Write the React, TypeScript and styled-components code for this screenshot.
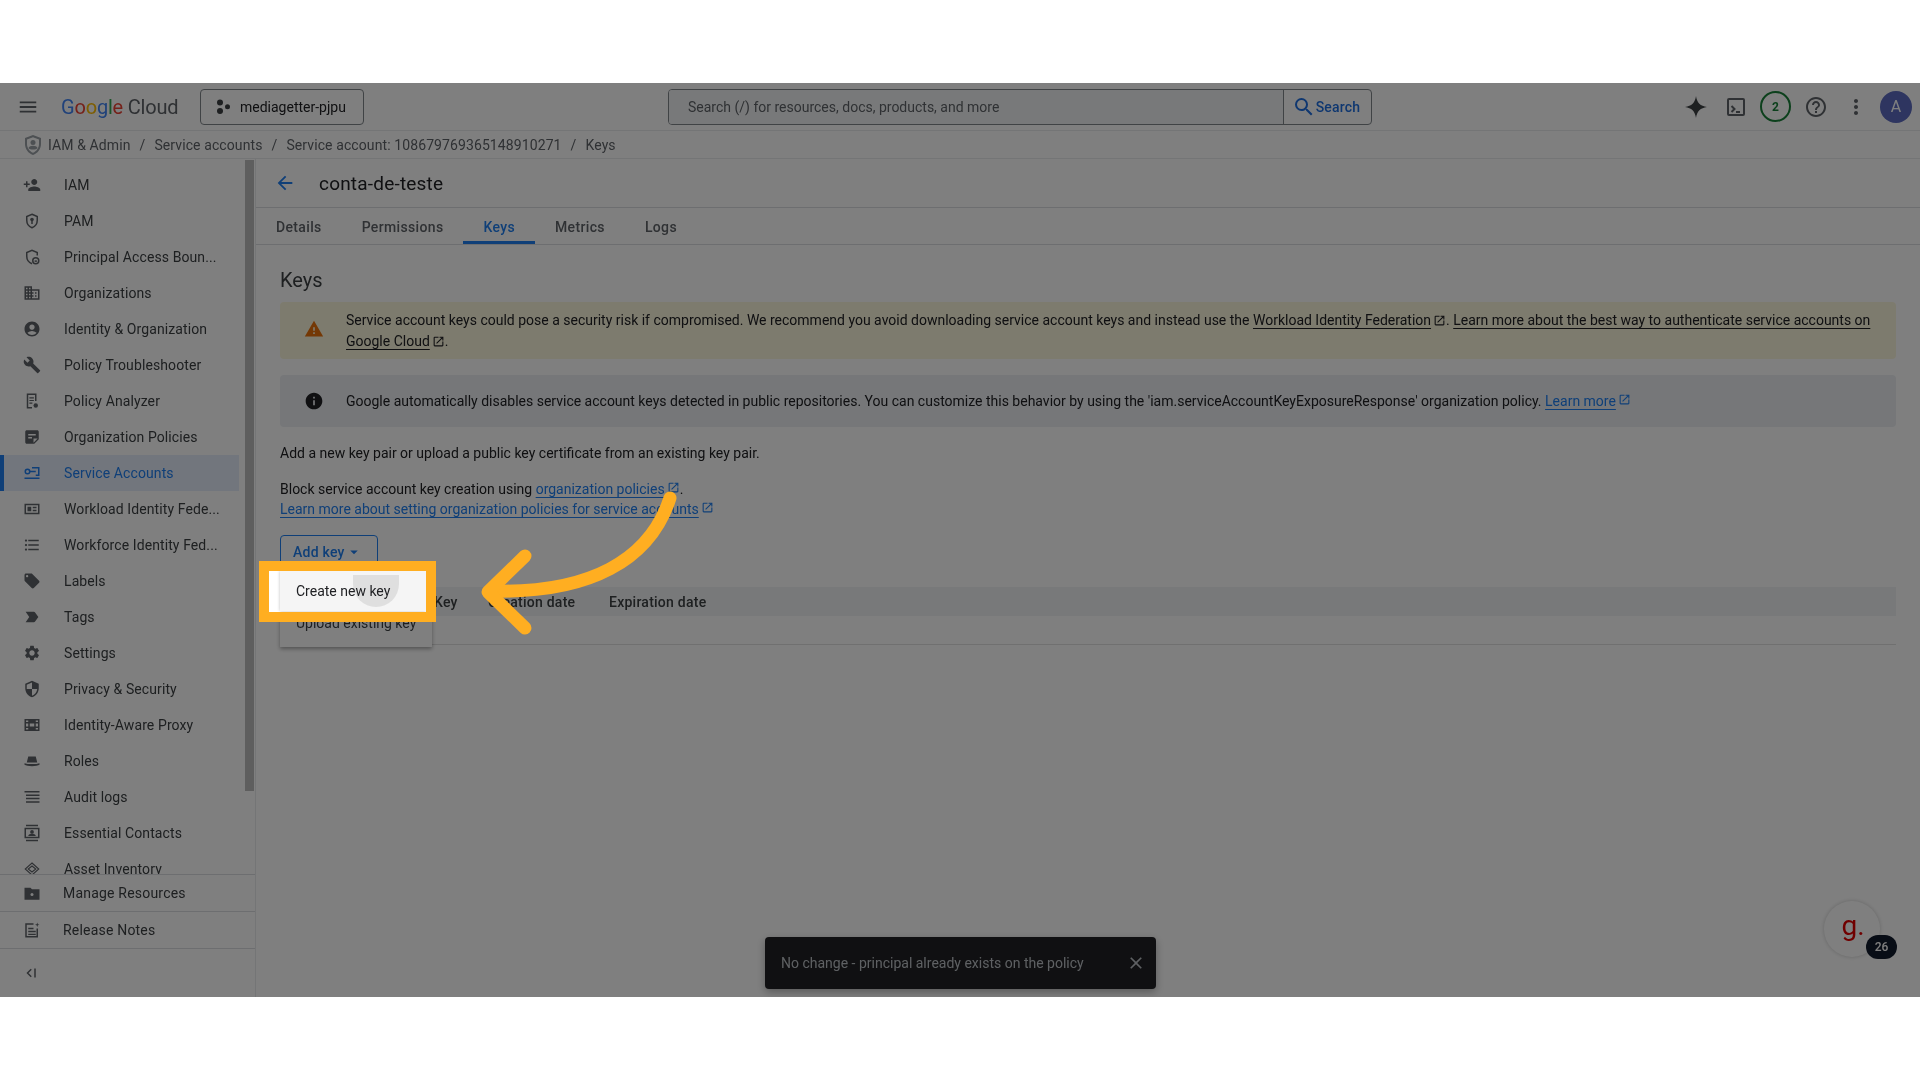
import React from 'react';
import styled, { createGlobalStyle } from 'styled-components';
import {
  MdAccountCircle,
  MdArrowBack,
  MdArrowDropDown,
  MdBuild,
  MdClose,
  MdFormatListBulleted,
  MdHelpOutline,
  MdInfo,
  MdLabelImportant,
  MdLocalOffer,
  MdMenu,
  MdMoreVert,
  MdOpenInNew,
  MdOutlineBusiness,
  MdPersonAdd,
  MdSearch,
  MdSecurity,
  MdSettings,
  MdStickyNote2,
  MdWarning,
} from 'react-icons/md';

const BLUE = '#1f7ff0';
const SANS = 'Roboto, "Liberation Sans", sans-serif';

const GlobalStyle = createGlobalStyle`
  html, body {
    margin: 0;
    padding: 0;
    background: #fff;
    font-family: ${SANS};
    overflow: hidden;
  }
`;

const Page = styled.div`
  display: flex;
  flex-direction: column;
  width: 1920px;
  height: 1080px;
`;

const Band = styled.div`
  flex: 0 0 83px;
  background: #fff;
`;

const Console = styled.div`
  position: relative;
  flex: 0 0 914px;
  display: flex;
  flex-direction: column;
  overflow: hidden;
  background: #fff;
  color: #202124;
  font-size: 14px;
  filter: blur(0.45px);
`;

// Top bar
const Header = styled.header`
  flex: 0 0 47px;
  display: flex;
  align-items: center;
  padding: 0 8px 0 17px;
  border-bottom: 1px solid #e8eaed;
`;

const IconSlot = styled.span<{ $color?: string }>`
  display: inline-flex;
  align-items: center;
  justify-content: center;
  color: ${({ $color }) => $color || '#5f6368'};
`;

const Logo = styled.div`
  margin-left: 22px;
  width: 117px;
  font-size: 20px;
  letter-spacing: -0.2px;
  color: #5f6368;
  white-space: nowrap;
`;

const LogoLetter = styled.span<{ $color: string }>`
  color: ${({ $color }) => $color};
`;

const ProjectPicker = styled.div`
  margin-left: 22px;
  width: 164px;
  height: 36px;
  box-sizing: border-box;
  display: flex;
  align-items: center;
  gap: 9px;
  padding-left: 14px;
  border: 1px solid #80868b;
  border-radius: 4px;
  font-size: 14px;
  color: #202124;
`;

const SearchGroup = styled.div`
  margin-left: 304px;
  width: 704px;
  height: 36px;
  box-sizing: border-box;
  display: flex;
  border: 1px solid #80868b;
  border-radius: 4px;
`;

const SearchField = styled.div`
  flex: 1;
  display: flex;
  align-items: center;
  padding-left: 19px;
  background: #f1f3f4;
  color: #5f6368;
  border-right: 1px solid #80868b;
  border-radius: 3px 0 0 3px;
`;

const SearchButton = styled.div`
  flex: 0 0 87px;
  box-sizing: border-box;
  display: flex;
  align-items: center;
  justify-content: center;
  padding-right: 3px;
  color: #1f6fe0;
  font-weight: 500;
  letter-spacing: 0.2px;
`;

const HeaderIcons = styled.div`
  margin-left: auto;
  display: flex;
  align-items: center;
  gap: 8px;
`;

const HeaderIcon = styled.div`
  width: 32px;
  height: 32px;
  display: flex;
  align-items: center;
  justify-content: center;
`;

const StatusRing = styled.div`
  width: 31px;
  height: 31px;
  margin-right: 1px;
  box-sizing: border-box;
  display: flex;
  align-items: center;
  justify-content: center;
  border: 2px solid #188038;
  border-radius: 50%;
  color: #188038;
  font-size: 12px;
  font-weight: 700;
`;

const Avatar = styled.div`
  width: 32px;
  height: 32px;
  display: flex;
  align-items: center;
  justify-content: center;
  border-radius: 50%;
  background: #5c6bc0;
  color: #fff;
  font-size: 16px;
`;

// Breadcrumb
const Crumbs = styled.nav`
  flex: 0 0 28px;
  box-sizing: border-box;
  display: flex;
  align-items: center;
  gap: 5px;
  padding-left: 23px;
  border-bottom: 1px solid #e8eaed;
  color: #5f6368;
  letter-spacing: 0.1px;
  font-size: 14px;
`;

const CrumbSep = styled.span`
  margin: 0 4px;
`;

// Body
const Body = styled.div`
  flex: 1;
  min-height: 0;
  display: flex;
`;

const Sidebar = styled.aside`
  position: relative;
  flex: 0 0 256px;
  box-sizing: border-box;
  display: flex;
  flex-direction: column;
  border-right: 1px solid #e8eaed;
`;

const NavList = styled.div`
  flex: 1;
  min-height: 0;
  overflow: hidden;
  padding-top: 8px;
  border-bottom: 1px solid #dadce0;
`;

const NavItem = styled.div<{ $active?: boolean }>`
  width: 239px;
  height: 36px;
  box-sizing: border-box;
  display: flex;
  align-items: center;
  gap: 23px;
  color: ${({ $active }) => ($active ? BLUE : '#3c4043')};
  background: ${({ $active }) => ($active ? '#e4ecfb' : 'transparent')};
  border-left: ${({ $active }) => ($active ? `4px solid ${BLUE}` : '0')};
  padding-left: ${({ $active }) => ($active ? '19px' : '23px')};
  letter-spacing: 0.1px;
  white-space: nowrap;
`;

const Scrollbar = styled.div`
  position: absolute;
  top: 1px;
  left: 245px;
  width: 9px;
  height: 631px;
  background: #bdbdbd;
`;

const FootItem = styled.div`
  flex: 0 0 37px;
  box-sizing: border-box;
  display: flex;
  align-items: center;
  gap: 22px;
  padding-left: 23px;
  border-bottom: 1px solid #dadce0;
  color: #3c4043;
  letter-spacing: 0.2px;
`;

const Collapse = styled.div`
  flex: 0 0 48px;
  display: flex;
  align-items: center;
  padding-left: 23px;
`;

// Main column
const Main = styled.main`
  flex: 1;
  min-width: 0;
  display: flex;
  flex-direction: column;
`;

const TitleRow = styled.div`
  flex: 0 0 49px;
  box-sizing: border-box;
  display: flex;
  align-items: center;
  gap: 23px;
  padding-left: 18px;
  border-bottom: 1px solid #dadce0;
`;

const Title = styled.h1`
  margin: 0;
  font-size: 19px;
  font-weight: 400;
  letter-spacing: 0.2px;
  color: #202124;
`;

const Tabs = styled.div`
  flex: 0 0 37px;
  box-sizing: border-box;
  display: flex;
  border-bottom: 1px solid #dadce0;
`;

const Tab = styled.div<{ $active?: boolean }>`
  display: flex;
  align-items: center;
  padding: 2px 20px 0;
  font-weight: 500;
  letter-spacing: 0.35px;
  color: ${({ $active }) => ($active ? BLUE : '#5f6368')};
  box-shadow: ${({ $active }) => ($active ? `inset 0 -3px 0 ${BLUE}` : 'none')};
`;

const Content = styled.div`
  padding: 22px 24px 0;
`;

const SectionTitle = styled.h2`
  margin: 0 0 8px;
  height: 27px;
  line-height: 27px;
  font-size: 20px;
  font-weight: 400;
  color: #3c4043;
`;

const Banner = styled.div<{ $tone: 'warn' | 'info' }>`
  display: flex;
  align-items: center;
  box-sizing: border-box;
  height: ${({ $tone }) => ($tone === 'warn' ? '57px' : '52px')};
  margin-bottom: 16px;
  padding: 0 16px 0 24px;
  gap: 22px;
  border-radius: 4px;
  line-height: 21px;
  background: ${({ $tone }) => ($tone === 'warn' ? '#fbf6dc' : '#eceef3')};
`;

const BannerIcon = styled(IconSlot)`
  flex: none;
  margin-top: ${({ $color }) => ($color === '#e8710a' ? '-4px' : '0')};
`;

const BannerText = styled.div`
  white-space: nowrap;
`;

const TextLink = styled.a<{ $plain?: boolean }>`
  color: ${({ $plain }) => ($plain ? '#202124' : BLUE)};
  text-decoration: underline;
  text-underline-offset: 3px;
`;

const ExternalIcon = styled(MdOpenInNew)`
  width: 13px;
  height: 13px;
  margin-left: 2px;
  vertical-align: -2px;
`;

const Copy = styled.p`
  margin: 0;
  line-height: 20px;
`;

const CopyBlock = styled(Copy)`
  margin-top: 16px;
`;

const AddKeyButton = styled.div`
  margin-top: 16px;
  width: 98px;
  height: 36px;
  box-sizing: border-box;
  display: flex;
  align-items: center;
  padding: 0 0 2px 12px;
  border: 1px solid ${BLUE};
  border-radius: 4px;
  color: ${BLUE};
  font-weight: 500;
  letter-spacing: 0.25px;
`;

const KeyTable = styled.div`
  margin-top: 16px;
  border-bottom: 1px solid #e0e0e0;
  padding-bottom: 28px;
`;

const KeyTableHead = styled.div`
  display: grid;
  grid-template-columns: 154px 54px 121px 1fr;
  height: 29px;
  align-items: center;
  background: #f1f3f4;
  color: #3c4043;
  font-weight: 500;
  letter-spacing: 0.25px;
`;

// Things lying over the page
const KeyMenu = styled.div`
  position: absolute;
  left: 280px;
  top: 488px;
  width: 152px;
  height: 76px;
  box-sizing: border-box;
  padding-top: 36px;
  background: #fff;
  box-shadow: 0 2px 4px rgba(0, 0, 0, 0.35);
`;

const MenuItem = styled.div`
  height: 32px;
  display: flex;
  align-items: center;
  padding-left: 16px;
  color: #3c4043;
  white-space: nowrap;
`;

const Toast = styled.div`
  position: absolute;
  left: 765px;
  bottom: 8px;
  width: 391px;
  height: 52px;
  box-sizing: border-box;
  display: flex;
  align-items: center;
  justify-content: space-between;
  padding: 0 10px 0 16px;
  border-radius: 4px;
  background: #202124;
  color: #bdc1c6;
  box-shadow: 0 3px 8px rgba(0, 0, 0, 0.3);
`;

const HelpBubble = styled.div`
  position: absolute;
  left: 1824px;
  top: 818px;
  width: 56px;
  height: 56px;
  box-sizing: border-box;
  display: flex;
  align-items: center;
  justify-content: center;
  padding-bottom: 6px;
  padding-left: 2px;
  border-radius: 50%;
  background: #fff;
  box-shadow: 0 0 4px rgba(0, 0, 0, 0.2);
  color: #e00000;
  font-size: 28px;
  font-weight: 400;
  line-height: 1;
`;

const HelpCount = styled.div`
  position: absolute;
  left: 42px;
  top: 34px;
  width: 31px;
  height: 24px;
  display: flex;
  align-items: center;
  justify-content: center;
  border-radius: 12px;
  background: #111a2c;
  color: #fff;
  font-size: 12px;
  font-weight: 500;
`;

const Scrim = styled.div`
  position: absolute;
  inset: 0;
  background: rgba(0, 0, 0, 0.5);
`;

const Spotlight = styled.div`
  position: absolute;
  left: 259px;
  top: 478px;
  width: 177px;
  height: 61px;
  box-sizing: border-box;
  overflow: hidden;
  border: 10px solid #ffae21;
  background: #fff;
`;

const SpotlightMenu = styled.div`
  position: relative;
  margin-left: 11px;
  height: 36px;
  padding-top: 4px;
  background: #f5f5f5;
  box-shadow: 0 0 3px rgba(0, 0, 0, 0.25);
  overflow: hidden;
`;

const Ripple = styled.div`
  position: absolute;
  left: 73px;
  top: 4px;
  width: 46px;
  height: 32px;
  border-radius: 0 0 23px 23px;
  background: #dfdfdf;
`;

const SpotlightLabel = styled(MenuItem)`
  position: relative;
  color: #202124;
`;

const ArrowLayer = styled.svg`
  position: absolute;
  left: 470px;
  top: 400px;
`;

const GlyphBox = styled.svg`
  flex: none;
  display: block;
`;

type GlyphProps = { size?: number; children: React.ReactNode };

const Glyph = ({ size = 18, children }: GlyphProps) => (
  <GlyphBox width={size} height={size} viewBox="0 0 24 24" fill="#5f6368">
    {children}
  </GlyphBox>
);

const stroke = { fill: 'none', stroke: '#5f6368', strokeWidth: 2 };

const navItems: { label: string; icon: React.ReactNode; active?: boolean }[] = [
  { label: 'IAM', icon: <MdPersonAdd size={18} /> },
  {
    label: 'PAM',
    icon: (
      <Glyph>
        <path {...stroke} d="M12 3l7 3v5c0 4.6-3 8.4-7 10-4-1.6-7-5.4-7-10V6z" />
        <circle cx="12" cy="10" r="2.4" />
        <path d="M11 11h2v5h-2z" />
      </Glyph>
    ),
  },
  {
    label: 'Principal Access Boun...',
    icon: (
      <Glyph>
        <path {...stroke} d="M19 10V6l-7-3-7 3v5c0 4.6 3 8.4 7 10" />
        <circle {...stroke} cx="17" cy="17" r="4" />
        <path d="M15.5 16.5h3v2h-3z" />
      </Glyph>
    ),
  },
  { label: 'Organizations', icon: <MdOutlineBusiness size={18} /> },
  { label: 'Identity & Organization', icon: <MdAccountCircle size={18} /> },
  { label: 'Policy Troubleshooter', icon: <MdBuild size={18} /> },
  {
    label: 'Policy Analyzer',
    icon: (
      <Glyph>
        <path {...stroke} d="M12 21H6V3h11v9" />
        <path d="M8.5 7h6v1.5h-6zM8.5 10.500h6V12h-6zM8.500 14h4v1.500h-4z" />
        <circle cx="17" cy="18" r="3" />
      </Glyph>
    ),
  },
  { label: 'Organization Policies', icon: <MdStickyNote2 size={18} /> },
  {
    label: 'Service Accounts',
    active: true,
    icon: (
      <Glyph>
        <g fill="none" stroke={BLUE} strokeWidth="2">
          <circle cx="6" cy="10" r="3" />
          <path d="M9 10h8M12 5h9v10h-4M2 19h20" />
        </g>
      </Glyph>
    ),
  },
  {
    label: 'Workload Identity Fede...',
    icon: (
      <Glyph>
        <path d="M2 5h20v14H2zm2 2v10h16V7z" />
        <path d="M6 9h5v6H6zM13 9h5v2h-5zM13 13h5v2h-5z" />
      </Glyph>
    ),
  },
  { label: 'Workforce Identity Fed...', icon: <MdFormatListBulleted size={18} /> },
  { label: 'Labels', icon: <MdLocalOffer size={18} /> },
  { label: 'Tags', icon: <MdLabelImportant size={18} /> },
  { label: 'Settings', icon: <MdSettings size={18} /> },
  { label: 'Privacy & Security', icon: <MdSecurity size={18} /> },
  {
    label: 'Identity-Aware Proxy',
    icon: (
      <Glyph>
        <path d="M2 4h20v16H2zm5 2H4v2h3zm0 4H4v4h3zm0 6H4v2h3zM20 6h-3v2h3zm0 4h-3v4h3zm0 6h-3v2h3z" />
        <path d="M9 10h6v4H9z" fill="#fff" />
      </Glyph>
    ),
  },
  {
    label: 'Roles',
    icon: (
      <Glyph>
        <path d="M7 6h10l2 8H5zM2 15c3 1.500 17 1.500 20 0v2c-3 2.500-17 2.500-20 0z" />
      </Glyph>
    ),
  },
  {
    label: 'Audit logs',
    icon: (
      <Glyph>
        <path d="M2 4h20v2H2zM4 8.500h18v2H4zM4 13h18v2H4zM4 17.500h18v2H4z" />
      </Glyph>
    ),
  },
  {
    label: 'Essential Contacts',
    icon: (
      <Glyph>
        <path d="M4 1h16v2H4zM4 21h16v2H4zM2 5h20v14H2zm2 2v10h16V7z" />
        <circle cx="12" cy="10.500" r="2.500" />
        <path d="M7 16c0-4 10-4 10 0z" />
      </Glyph>
    ),
  },
  {
    label: 'Asset Inventory',
    icon: (
      <Glyph>
        <g {...stroke} strokeWidth="1.500">
          <path d="M12 4l9 8-9 8-9-8z" />
          <path d="M12 8l5 4-5 4-5-4z" />
        </g>
      </Glyph>
    ),
  },
];

const KeysAlert = () => (
  <Banner $tone="warn">
    <BannerIcon $color="#e8710a">
      <MdWarning size={20} />
    </BannerIcon>
    <BannerText>
      Service account keys could pose a security risk if compromised. We recommend you avoid downloading service
      account keys and instead use the <TextLink $plain>Workload Identity Federation</TextLink>
      <ExternalIcon />. <TextLink $plain>Learn more about the best way to authenticate service accounts on</TextLink>
      <br />
      <TextLink $plain>Google Cloud</TextLink>
      <ExternalIcon />.
    </BannerText>
  </Banner>
);

const ExposureNotice = () => (
  <Banner $tone="info">
    <BannerIcon $color="#202124">
      <MdInfo size={20} />
    </BannerIcon>
    <BannerText>
      Google automatically disables service account keys detected in public repositories. You can customize this
      behavior by using the 'iam.serviceAccountKeyExposureResponse' organization policy.{' '}
      <TextLink>Learn more</TextLink>
      <IconSlot $color={BLUE}>
        <ExternalIcon />
      </IconSlot>
    </BannerText>
  </Banner>
);

export default function App() {
  return (
    <Page>
      <GlobalStyle />
      <Band />
      <Console>
        <Header>
          <IconSlot>
            <MdMenu size={22} />
          </IconSlot>
          <Logo>
            <LogoLetter $color="#4285f4">G</LogoLetter>
            <LogoLetter $color="#ea4335">o</LogoLetter>
            <LogoLetter $color="#fbbc04">o</LogoLetter>
            <LogoLetter $color="#4285f4">g</LogoLetter>
            <LogoLetter $color="#34a853">l</LogoLetter>
            <LogoLetter $color="#ea4335">e</LogoLetter> Cloud
          </Logo>
          <ProjectPicker>
            <svg width="16" height="16" viewBox="0 0 16 16" fill="#3c4043">
              <circle cx="5" cy="3.500" r="3" />
              <circle cx="5" cy="12" r="3" />
              <circle cx="12.500" cy="7.700" r="2.500" />
            </svg>
            mediagetter-pjpu
          </ProjectPicker>
          <SearchGroup>
            <SearchField>Search (/) for resources, docs, products, and more</SearchField>
            <SearchButton>
              <MdSearch size={24} />
              Search
            </SearchButton>
          </SearchGroup>
          <HeaderIcons>
            <HeaderIcon>
              <svg width="24" height="24" viewBox="0 0 24 24" fill="#3c4043">
                <path d="M12 1c.8 6.500 4.500 10.200 11 11-6.500.8-10.200 4.500-11 11-.8-6.500-4.500-10.200-11-11 6.500-.8 10.200-4.500 11-11z" />
              </svg>
            </HeaderIcon>
            <HeaderIcon>
              <svg width="22" height="22" viewBox="0 0 22 22" fill="none" stroke="#5f6368" strokeWidth="2">
                <rect x="3" y="3" width="16" height="16" rx="1" />
                <path d="M6.500 10l3 3-3 3M11 16h4" />
              </svg>
            </HeaderIcon>
            <StatusRing>2</StatusRing>
            <HeaderIcon>
              <MdHelpOutline size={24} color="#5f6368" />
            </HeaderIcon>
            <HeaderIcon>
              <MdMoreVert size={24} color="#5f6368" />
            </HeaderIcon>
            <Avatar>A</Avatar>
          </HeaderIcons>
        </Header>

        <Crumbs>
          <svg width="20" height="22" viewBox="0 0 20 22" fill="#9aa0a6">
            <path d="M10 1l8 3v6c0 5-3.400 9.500-8 11-4.600-1.500-8-6-8-11V4zm0 2.200L4 5.500V10c0 3.800 2.500 7.400 6 8.800 3.500-1.400 6-5 6-8.800V5.500z" />
            <circle cx="10" cy="8.500" r="2.500" />
            <path d="M5.500 14c1-3 8-3 9 0-1.400 2-7.600 2-9 0z" />
          </svg>
          IAM &amp; Admin
          <CrumbSep>/</CrumbSep>
          Service accounts
          <CrumbSep>/</CrumbSep>
          Service account: 108679769365148910271
          <CrumbSep>/</CrumbSep>
          Keys
        </Crumbs>

        <Body>
          <Sidebar>
            <NavList>
              {navItems.map((item) => (
                <NavItem key={item.label} $active={item.active}>
                  <IconSlot $color={item.active ? BLUE : undefined}>{item.icon}</IconSlot>
                  {item.label}
                </NavItem>
              ))}
            </NavList>
            <FootItem>
              <Glyph>
                <path d="M2 5h8l2 2h10v14H2z" />
                <circle cx="12" cy="14" r="2" fill="#fff" />
              </Glyph>
              Manage Resources
            </FootItem>
            <FootItem>
              <Glyph>
                <path {...stroke} d="M14 4H4v17h15V10" />
                <path d="M7 9h7v2H7zM7 13h10v2H7zM7 17h10v1.500H7zM19 2l.8 2.200L22 5l-2.200.8L19 8l-.8-2.200L16 5l2.200-.8z" />
              </Glyph>
              Release Notes
            </FootItem>
            <Collapse>
              <Glyph>
                <path {...stroke} d="M11 7l-5 5 5 5M16 6v12" />
              </Glyph>
            </Collapse>
            <Scrollbar />
          </Sidebar>

          <Main>
            <TitleRow>
              <IconSlot $color={BLUE}>
                <MdArrowBack size={22} />
              </IconSlot>
              <Title>conta-de-teste</Title>
            </TitleRow>
            <Tabs>
              <Tab>Details</Tab>
              <Tab>Permissions</Tab>
              <Tab $active>Keys</Tab>
              <Tab>Metrics</Tab>
              <Tab>Logs</Tab>
            </Tabs>
            <Content>
              <SectionTitle>Keys</SectionTitle>
              <KeysAlert />
              <ExposureNotice />
              <Copy>Add a new key pair or upload a public key certificate from an existing key pair.</Copy>
              <CopyBlock>
                Block service account key creation using <TextLink>organization policies</TextLink>
                <IconSlot $color={BLUE}>
                  <ExternalIcon />
                </IconSlot>
                .
                <br />
                <TextLink>Learn more about setting organization policies for service accounts</TextLink>
                <IconSlot $color={BLUE}>
                  <ExternalIcon />
                </IconSlot>
              </CopyBlock>
              <AddKeyButton>
                Add key
                <MdArrowDropDown size={18} />
              </AddKeyButton>
              <KeyTable>
                <KeyTableHead>
                  <span />
                  <span>Key</span>
                  <span>Creation date</span>
                  <span>Expiration date</span>
                </KeyTableHead>
              </KeyTable>
            </Content>
          </Main>
        </Body>

        <KeyMenu>
          <MenuItem>Upload existing key</MenuItem>
        </KeyMenu>
        <Toast>
          No change - principal already exists on the policy
          <MdClose size={20} />
        </Toast>
        <HelpBubble>
          g.
          <HelpCount>26</HelpCount>
        </HelpBubble>

        <Scrim />

        <Spotlight>
          <SpotlightMenu>
            <Ripple />
            <SpotlightLabel>Create new key</SpotlightLabel>
          </SpotlightMenu>
        </Spotlight>

        <ArrowLayer width="220" height="160" viewBox="470 483 220 160" fill="none" stroke="#ffae21" strokeWidth="13" strokeLinecap="round" strokeLinejoin="round">
          <path d="M670 498C650 560 590 594 490 591" />
          <path d="M525 556L488 592L525 628" />
        </ArrowLayer>
      </Console>
      <Band />
    </Page>
  );
}
